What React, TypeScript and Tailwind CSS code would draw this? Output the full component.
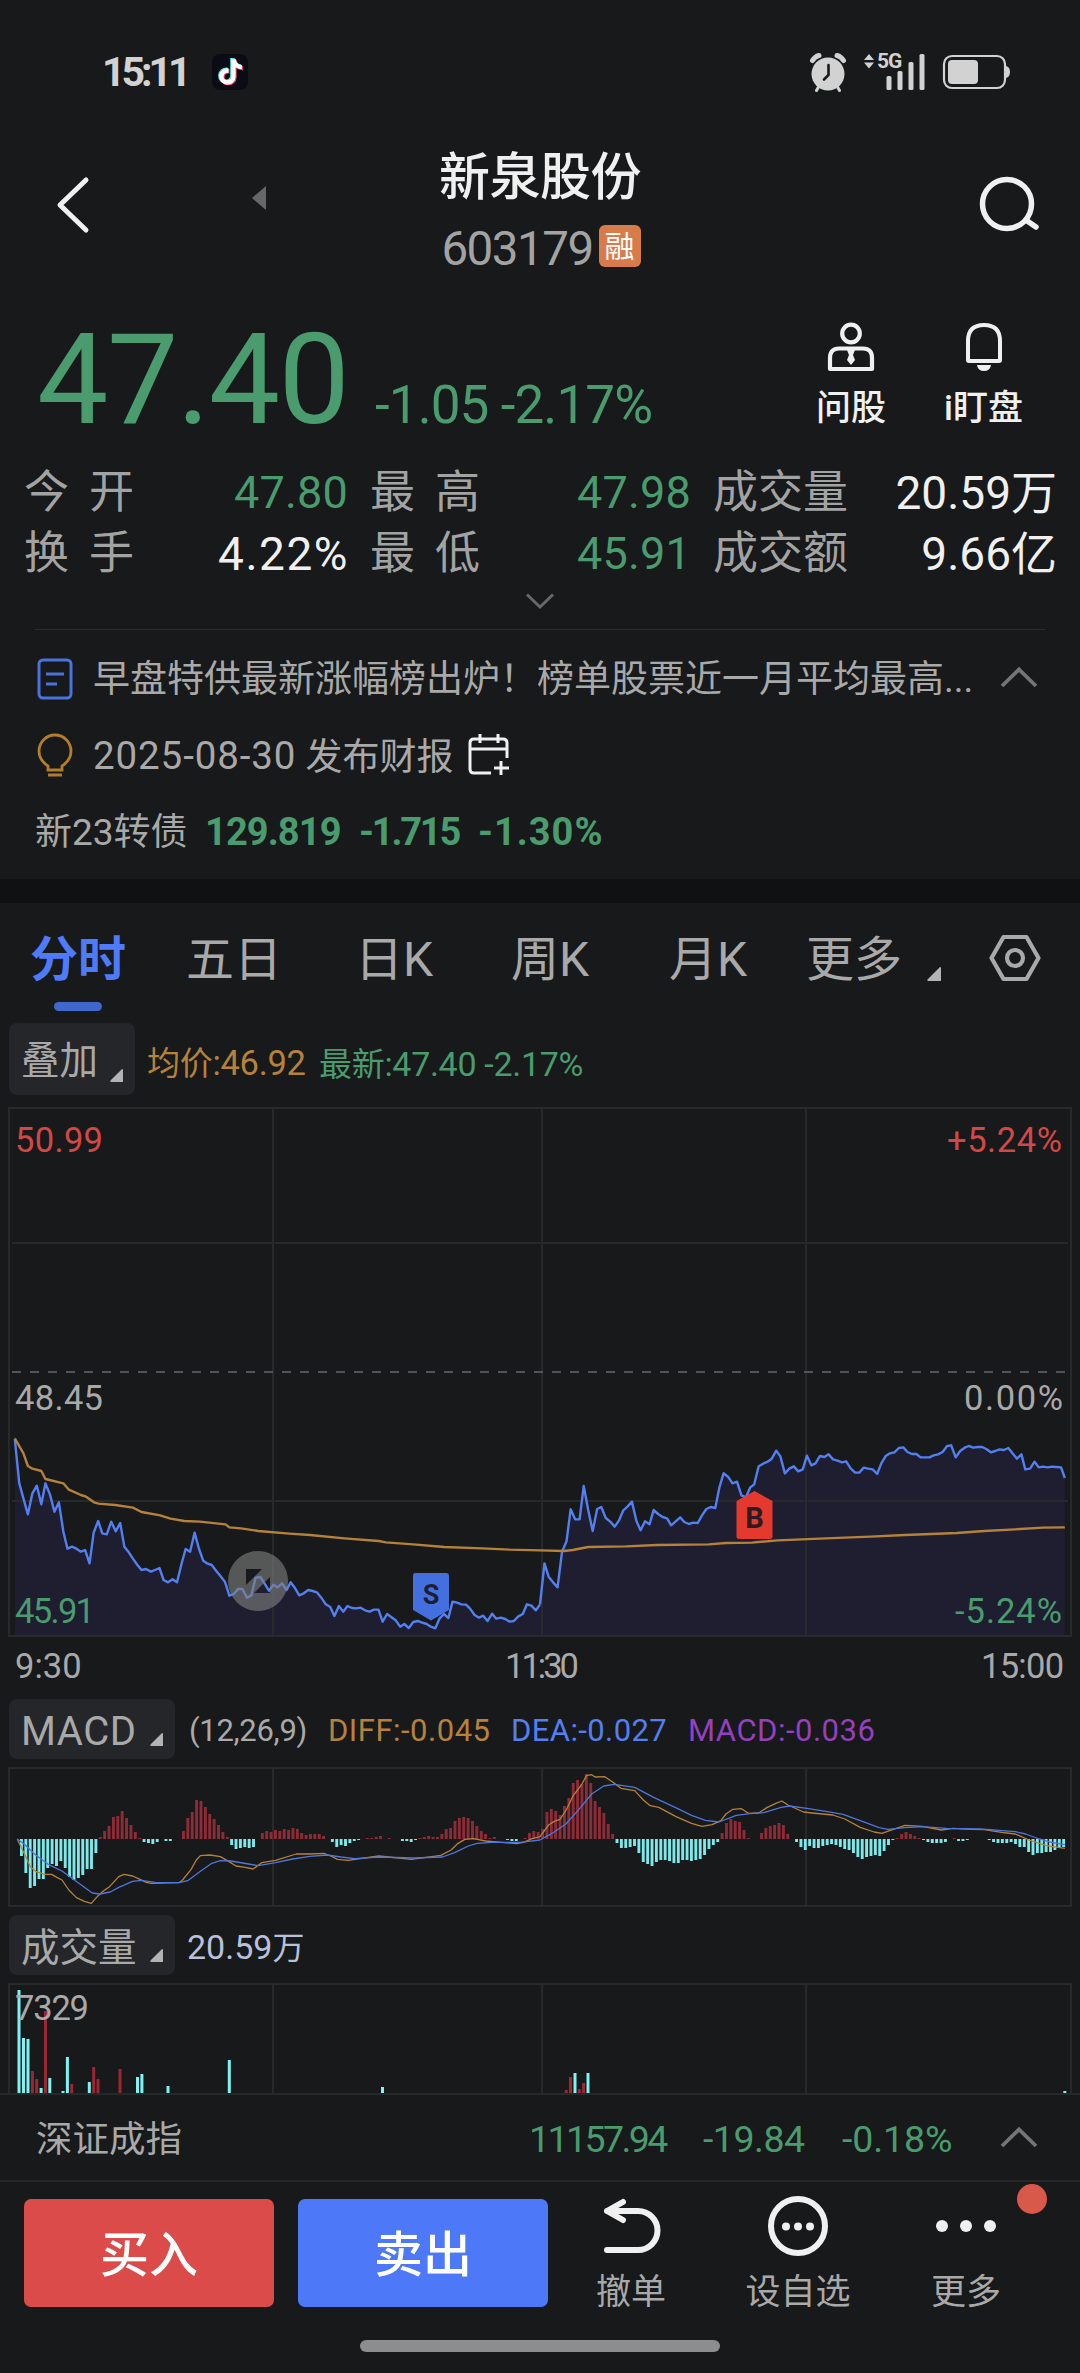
import React from "react";
import { FaTiktok } from "react-icons/fa";

const MORNING_PRICE =
  "43,297 56,430 68,475 81,523 94,460 107,437 120,493 132,430 145,463 158,515 171,487 184,575 196,626 209,620 222,626 235,635 247,630 260,670 272,578 285,543 297,580 310,583 323,545 336,574 349,549 361,620 374,637 386,656 399,675 411,690 424,687 438,695 450,690 463,684 475,720 488,727 501,718 514,727 527,672 539,627 552,635 565,578 578,627 590,662 603,671 615,675 628,693 640,708 653,725 666,767 679,762 691,747 704,747 717,773 730,766 742,713 756,711 768,730 781,752 794,734 806,742 819,730 832,750 844,727 857,745 869,766 882,760 895,750 908,753 920,757 933,773 946,793 959,801 971,828 984,798 997,815 1009,798 1022,804 1035,805 1047,803 1060,811 1073,815 1086,809 1099,809 1111,845 1124,822 1137,832 1149,841 1162,860 1174,852 1187,864 1200,846 1213,843 1226,848 1239,852 1251,860 1264,865 1276,836 1289,822 1302,834 1314,785 1327,788 1340,793 1353,794 1365,806 1378,825 1391,833 1403,827 1416,843 1429,821 1441,836 1454,833 1467,837 1480,845 1492,843 1505,829 1518,822 1530,793 1543,797 1556,811 1568,793";
const AFTERNOON_PRICE =
  "0,793 13,670 25,710 38,727 51,742 64,635 77,604 89,508 102,538 115,538 127,438 140,510 153,573 166,507 178,501 191,534 204,545 217,560 229,542 242,511 254,500 267,485 280,543 292,571 305,544 318,553 330,510 343,522 356,531 369,535 381,556 394,544 407,532 419,546 432,552 445,548 458,549 470,527 483,507 496,501 509,504 521,442 533,400 546,410 559,430 572,425 585,466 598,472 610,443 622,433 635,379 648,371 661,365 673,356 686,332 698,349 711,400 724,386 737,379 750,394 763,388 775,347 788,376 800,370 813,348 826,351 838,343 851,358 864,362 877,367 889,364 902,385 915,398 927,398 940,383 953,386 966,388 979,402 991,370 1004,348 1016,340 1029,337 1042,324 1055,322 1067,336 1080,342 1093,342 1105,352 1118,352 1131,352 1143,346 1156,343 1169,336 1182,318 1194,316 1207,352 1220,333 1233,323 1245,318 1258,323 1271,321 1284,321 1296,327 1309,337 1322,333 1334,328 1347,330 1360,324 1372,340 1385,356 1398,343 1409,388 1423,386 1436,365 1448,382 1461,380 1474,382 1486,380 1499,381 1513,382 1524,414";
const MORNING_AVG =
  "43,295 68,340 81,378 94,386 120,393 132,417 184,430 200,449 235,465 250,470 273,487 286,491 335,495 386,503 411,516 465,526 495,536 535,543 580,545 655,553 666,562 700,565 750,573 840,581 900,585 1000,595 1100,603 1120,607 1200,613 1290,621 1400,625 1480,629 1568,631";
const AFTERNOON_AVG =
  "0,631 70,633 95,630 140,621 250,619 340,615 490,613 540,609 615,608 690,601 830,595 960,590 1060,585 1210,579 1290,573 1380,568 1460,563 1524,562";
const MORNING_DIFF =
  "50,447 60,468 75,500 88,530 105,545 130,553 150,553 165,562 180,570 200,600 222,623 245,634 265,640 285,617 300,603 318,590 345,560 360,553 385,558 400,565 425,577 440,580 520,578 530,570 555,538 570,510 582,497 610,495 640,500 665,515 685,528 712,532 735,537 760,518 800,511 860,492 900,492 940,490 960,498 980,508 1010,511 1100,498 1195,508 1280,496 1310,480 1330,460 1350,448 1375,446 1410,453 1500,461 1520,457 1545,446 1568,440";
const AFTERNOON_DIFF =
  "0,440 25,405 40,395 58,388 75,362 97,316 120,285 135,257 150,254 160,261 188,260 215,279 235,295 275,302 300,330 320,347 345,352 395,380 440,400 470,409 500,404 525,392 540,372 560,358 585,356 605,370 635,369 660,352 685,340 702,333 720,345 765,366 790,369 850,375 885,387 930,412 970,426 993,430 1015,422 1060,406 1110,409 1165,420 1200,415 1250,418 1290,419 1340,427 1380,432 1420,450 1470,467 1524,475";
const MORNING_DEA =
  "50,447 70,462 100,492 140,523 180,543 205,562 245,592 268,609 290,612 320,606 345,592 385,574 410,571 450,577 520,578 545,572 580,545 615,520 640,512 670,513 750,527 800,518 850,507 900,499 950,495 990,501 1030,506 1100,501 1200,504 1285,501 1320,488 1360,468 1385,460 1430,457 1510,457 1568,450";
const AFTERNOON_DEA =
  "0,450 40,427 75,402 110,362 150,312 185,288 215,283 275,292 330,322 400,356 440,376 480,391 520,396 570,376 610,371 650,368 700,352 725,348 780,356 830,364 880,373 930,392 985,413 1010,418 1060,413 1110,410 1180,415 1280,417 1380,425 1410,432 1450,447 1480,456 1524,464";

// One histogram value per minute, split by trading session.
const MACD_MORNING = [
  -51, -102, -147, -141, -120, -120, -87, -75, -81, -66, -87, -114, -123, -117, -108, -90, -90, -42, 6, 24, 39, 66, 69, 84,
  63, 42, 21, 3, -9, -12, -15, -9, 0, -6, -6, 0, 0, 24, 63, 81, 117, 114, 96, 75, 60, 42, 21, 6, -18, -30, -27, -24, -27,
  -24, 0, 18, 24, 21, 27, 24, 30, 27, 33, 30, 18, 12, 15, 15, 15, 9, 0, -9, -24, -18, -21, -12, -6, -3, 0, 3, 3, 6, 9, 0,
  3, 0, 0, -6, -6, -9, -3, 3, 6, 9, 6, 6, 15, 30, 33, 54, 63, 66, 63, 54, 39, 24, 15, 3, 6, 0, 0, -3, -6, -6, 0, 3, 18,
  24, 21,
];
const MACD_AFTERNOON = [
  30, 81, 90, 84, 72, 99, 123, 168, 177, 165, 195, 168, 114, 96, 78, 45, 15, -12, -27, -27, -24, -21, -42, -69, -75, -81,
  -69, -63, -63, -66, -72, -72, -63, -63, -66, -63, -60, -48, -30, -18, -9, 18, 48, 60, 54, 51, 27, 3, 0, 0, 18, 33, 39,
  42, 48, 42, 15, 0, -9, -24, -33, -21, -27, -27, -21, -18, -15, -18, -24, -30, -33, -42, -54, -60, -54, -51, -48, -51,
  -36, -18, -3, 3, 15, 21, 15, 9, 3, -3, -9, -12, -12, -12, -9, 0, 3, -6, -6, -3, 0, 0, 0, 0, -3, -9, -12, -12, -12, -9,
  -15, -24, -24, -39, -48, -42, -42, -39, -39, -33, -24, -24,
];

// [x, height, rising]
const VOLUME: [number, number, boolean][] = [
  [19, 103, false], [23.5, 55, false], [28, 54, false], [32.4, 22, true], [36.7, 14, true], [41.1, 5, false],
  [45.5, 82, true], [49.8, 15, false], [63, 2, false], [67.4, 36, false], [71.7, 9, true], [89.3, 11, false],
  [93.7, 26, true], [98, 14, true], [120, 24, true], [137.5, 16, false], [141.9, 19, false], [168, 7, false],
  [229.3, 33, false], [382.5, 6, false], [566.2, 3, true], [570.5, 16, true], [575, 20, false], [579.3, 4, true],
  [583.6, 10, true], [588, 20, false], [1064.8, 2, false],
];

const AM = "translate(0 0) scale(0.34439 0.33333)";
const PM = "translate(540 0) scale(0.34439 0.33333)";
const GRID = "#27292b";
const GREEN = "#4a9b6e";
const GREY = "#a9a9a9";

function Series({ am, pm, color, width }: { am: string; pm: string; color: string; width: number }) {
  return (
    <g fill="none" stroke={color} strokeWidth={width} strokeLinejoin="round">
      <polyline transform={AM} points={am} vectorEffect="non-scaling-stroke" />
      <polyline transform={PM} points={pm} vectorEffect="non-scaling-stroke" />
    </g>
  );
}

function StatusBar() {
  return (
    <div className="flex h-[144px] items-center pl-[102px] pr-[70px] text-[#d2d2d2]">
      <span className="w-[110px] pt-[1px] text-[41px] font-bold tracking-[-4px]">15:11</span>
      <svg width="36" height="36" viewBox="0 0 36 36">
        <rect width="36" height="36" rx="8" fill="#0b0b16" />
        <FaTiktok x="4.500" y="4" size={26} color="#4de8e4" />
        <FaTiktok x="6.500" y="5.500" size={26} color="#f2425c" />
        <FaTiktok x="5.500" y="4.700" size={26} color="#ffffff" />
      </svg>
      <svg className="ml-auto" width="38" height="40" viewBox="0 0 38 40" fill="none" stroke="#d2d2d2">
        <circle cx="19" cy="22" r="16.500" fill="#d2d2d2" stroke="none" />
        <path d="M3.500 8.500 Q6 4.500 10 3.500 M34.500 8.500 Q32 4.500 28 3.500" strokeWidth="5" strokeLinecap="round" />
        <path d="M10 34 L7.500 38.500 M28 34 L30.500 38.500" strokeWidth="3" strokeLinecap="round" />
        <path d="M19.500 13 V23 L15 27.500" stroke="#17191a" strokeWidth="2.600" strokeLinecap="round" />
      </svg>
      <div className="relative ml-[17px] h-[38px] w-[62px]">
        <svg width="62" height="38" viewBox="0 0 62 38" fill="#d2d2d2">
          <path d="M5 1 L10 7 H0 Z M0 9.500 H10 L5 15.500 Z" />
          <rect x="22.500" y="23" width="5" height="14" rx="1.500" />
          <rect x="33.500" y="18" width="5" height="19" rx="1.500" />
          <rect x="44.500" y="9" width="5" height="28" rx="1.500" />
          <rect x="55.500" y="1" width="5" height="36" rx="1.500" />
        </svg>
        <span className="absolute left-[13px] top-[-4px] text-[21px] font-bold leading-[25px] tracking-[-1px]">5G</span>
      </div>
      <svg className="ml-[16px]" width="68" height="36" viewBox="0 0 68 36">
        <rect x="2" y="2" width="61" height="32" rx="8" fill="none" stroke="#d2d2d2" strokeWidth="2.200" />
        <rect x="6" y="6" width="30" height="24" rx="4" fill="#d2d2d2" />
        <path d="M64 12 Q68 13 68 18 Q68 23 64 24 Z" fill="#d2d2d2" />
      </svg>
    </div>
  );
}

function Header() {
  return (
    <header className="flex h-[144px]">
      <div className="flex w-[378px] items-start pl-[55px]">
        <svg className="mt-[32px]" width="36" height="58" viewBox="0 0 36 58" fill="none" stroke="#f0f0f0" strokeWidth="5" strokeLinecap="round" strokeLinejoin="round">
          <path d="M31 4 L5 29 L31 54" />
        </svg>
        <svg className="ml-[160px] mt-[41px]" width="16" height="26" viewBox="0 0 16 26">
          <path d="M15 1 V25 L1 13 Z" fill="#666768" />
        </svg>
      </div>
      <div className="flex w-[324px] flex-col items-center pt-[6px]">
        <h1 className="h-[56px] text-[51px] font-medium leading-[56px] tracking-[-0.500px] text-[#f0f0f0]">新泉股份</h1>
        <div className="mt-[19px] flex h-[42px] items-center gap-[6px] pl-[2px]">
          <span className="pt-[5px] text-[47.500px] leading-[42px] tracking-[-1.500px] text-[#a3a3a3]">603179</span>
          <span className="flex h-[42px] w-[42px] items-center justify-center rounded-[6px] bg-[#d87b4b] pt-[2px] text-[30px] leading-none text-white">融</span>
        </div>
      </div>
      <div className="flex w-[378px] items-start justify-end pr-[38px] pt-[30px]">
        <svg width="64" height="62" viewBox="0 0 64 62" fill="none" stroke="#f0f0f0" strokeWidth="5.500" strokeLinecap="round">
          <circle cx="29" cy="30" r="24.500" />
          <path d="M50 47.500 L58 53" />
        </svg>
      </div>
    </header>
  );
}

function PriceRow() {
  return (
    <div className="flex h-[173px] items-start pl-[37px] pr-[57px]">
      <div className="flex items-baseline pt-[28px] text-[#4a9b6e]">
        <span className="w-[338px] text-[127px] leading-[127px] tracking-[-1.500px]">47.40</span>
        <span className="whitespace-pre text-[53px] leading-[53px] tracking-[-0.900px]">-1.05 -2.17%</span>
      </div>
      <div className="ml-auto flex gap-[58px] pt-[34px] text-[35px] font-medium leading-[36px] text-[#f0f0f0]">
        <div className="flex flex-col items-center gap-[19px]">
          <svg width="50" height="50" viewBox="0 0 50 50" fill="none" stroke="#f0f0f0" strokeWidth="4.200" strokeLinejoin="round">
            <circle cx="25" cy="11.500" r="8.800" />
            <path d="M13 26.500 H37 Q46 26.500 46 36 V47 H4 V36 Q4 26.500 13 26.500 Z" />
            <path d="M21 28 H29 L27 33 L29 38 L25 43 L21 38 L23 33 Z" fill="#f0f0f0" stroke="none" />
          </svg>
          <span>问股</span>
        </div>
        <div className="flex flex-col items-center gap-[19px]">
          <svg width="50" height="50" viewBox="0 0 50 50" fill="none" stroke="#f0f0f0" strokeWidth="4" strokeLinejoin="round">
            <path d="M9 38 V19 Q9 3 25 3 Q41 3 41 19 V38 Q41 39 40 39 H10 Q9 39 9 38 Z" />
            <path d="M18 43 H32 Q31 49 25 49 Q19 49 18 43 Z" fill="#f0f0f0" stroke="none" />
          </svg>
          <span>i盯盘</span>
        </div>
      </div>
    </div>
  );
}

function Stat({ label, value, tone, wide }: { label: string; value: string; tone: string; wide?: boolean }) {
  return (
    <div className="flex h-[61px] items-center justify-between whitespace-nowrap pt-[2px] text-[45px] leading-none">
      <span className={wide ? "tracking-[20px] text-[#a3a3a3]" : "text-[#a3a3a3]"}>{label}</span>
      <span className={tone}>{value}</span>
    </div>
  );
}

const FALLING = "mr-[-2px] tracking-[0.200px] text-[#4a9b6e]";
const NEUTRAL = "mr-[-2px] text-[46px] text-[#f0f0f0]";
const RATIO = "mr-[-3px] text-[46px] tracking-[1.500px] text-[#f0f0f0]";

function ChevronUp() {
  return (
    <svg width="38" height="22" viewBox="0 0 38 22" fill="none" stroke="#747577" strokeWidth="3.800">
      <path d="M2 20 L19 3.500 L36 20" />
    </svg>
  );
}

function News() {
  return (
    <section className="whitespace-nowrap text-[37px] leading-none text-[#a9a9a9]">
      <div className="flex h-[98px] items-center pl-[37px] pr-[42px]">
        <svg width="36" height="42" viewBox="0 0 36 42" fill="none" stroke="#4a73dc" strokeWidth="3">
          <rect x="2" y="2" width="32" height="38" rx="4" />
          <path d="M9 16 H27 M9 26 H20" />
        </svg>
        <span className="ml-[20px]">早盘特供最新涨幅榜出炉！榜单股票近一月平均最高...</span>
        <span className="mb-[4px] ml-auto">
          <ChevronUp />
        </span>
      </div>
      <div className="flex h-[54px] items-center pl-[37px]">
        <svg width="36" height="44" viewBox="0 0 36 44" fill="none" stroke="#b07e2c" strokeWidth="2.800">
          <path d="M11 37 V33 Q2 27 2 18 A16 16 0 0 1 34 18 Q34 27 25 33 V37 Z" />
          <path d="M11 42 H25" strokeWidth="3" />
        </svg>
        <span className="ml-[20px] pt-[3px] text-[38.500px] tracking-[0.900px]">2025-08-30</span>
        <span className="ml-[9px] pt-[4px] text-[37px]">发布财报</span>
        <svg className="ml-[15px]" width="42" height="42" viewBox="0 0 42 42" fill="none" stroke="#f0f0f0" strokeWidth="3">
          <path d="M23 39 H6 Q2 39 2 35 V9 Q2 5 6 5 H35 Q39 5 39 9 V24 M2 15 H39 M12 0 V9 M30 0 V9 M33 27 V41 M26 34 H41" />
        </svg>
      </div>
      <div className="flex h-[97px] items-center pl-[35px] pt-[3px]">
        <span className="w-[170px]">新23转债</span>
        <span className="flex text-[38px] font-bold text-[#4a9b6e]">
          <span className="w-[154px] tracking-[-0.900px]">129.819</span>
          <span className="w-[119px] tracking-[-2.200px]">-1.715</span>
          <span className="tracking-[1px]">-1.30%</span>
        </span>
      </div>
    </section>
  );
}

function Corner({ size }: { size: number }) {
  return (
    <svg width={size} height={size} viewBox="0 0 14 14" fill="#b3b3b3">
      <path d="M13 0 Q14 0 14 1 V14 H1 Q0 13.500 0.500 12.500 Z" />
    </svg>
  );
}

function Tabs() {
  return (
    <nav className="flex h-[112px] items-center whitespace-nowrap pr-[39px] pt-[2px] text-[48px] leading-none text-[#a9a9a9]">
      <span className="relative ml-[30px] w-[156px] font-bold text-[#4f7bfb]">
        分时
        <span className="absolute left-[24px] top-[66px] h-[9px] w-[48px] rounded-full bg-[#3f67cc]" />
      </span>
      <span className="w-[169px]">五日</span>
      <span className="w-[156px]">日K</span>
      <span className="w-[158px]">周K</span>
      <span className="w-[137px]">月K</span>
      <span>更多</span>
      <span className="ml-[25px] mt-[28px]">
        <Corner size={14} />
      </span>
      <svg className="mb-[5px] ml-auto" width="52" height="48" viewBox="0 0 52 48" fill="none" stroke="#a9a9a9" strokeWidth="4.200" strokeLinejoin="round">
        <path d="M14.500 3 H37.500 L49.500 24 L37.500 45 H14.500 L2.500 24 Z" />
        <circle cx="26" cy="24" r="8" />
      </svg>
    </nav>
  );
}

function Chip({ label, className }: { label: string; className: string }) {
  return (
    <div className={`relative ml-[9px] rounded-[8px] bg-[#242629] pl-[12px] leading-none text-[#a9a9a9] ${className}`}>
      <span>{label}</span>
      <span className="absolute bottom-[13px] right-[12px]">
        <Corner size={13} />
      </span>
    </div>
  );
}

function PriceChart() {
  return (
    <svg className="block" width="1080" height="545" viewBox="0 1095 1080 545">
      <g transform="translate(0 1340)">
        <polygon transform={AM} points={`43,885 ${MORNING_PRICE} 1568,885`} fill="#1e1e30" />
        <polygon transform={PM} points={`0,885 ${AFTERNOON_PRICE} 1524,885`} fill="#1e1e30" />
      </g>
      <g stroke={GRID} strokeWidth="2" fill="none">
        <rect x="9" y="1108" width="1062" height="528" />
        <path d="M273 1108 V1636 M542 1108 V1636 M806 1108 V1636 M12 1243 H1068 M12 1501 H1068" />
      </g>
      <path d="M12 1372 H1065" stroke="#505357" strokeWidth="2" strokeDasharray="9 9" />
      <g fontSize="34.500" fill={GREY}>
        <text x="15" y="1151.500" fill="#d34846" textLength="88">50.99</text>
        <text x="15" y="1409.500" textLength="88">48.45</text>
        <text x="15" y="1622.500" fill={GREEN} textLength="80">45.91</text>
        <text x="947" y="1151.500" fill="#d34846" textLength="115">+5.24%</text>
        <text x="964" y="1409.500" textLength="99">0.00%</text>
        <text x="955" y="1622.500" fill={GREEN} textLength="107">-5.24%</text>
      </g>
      <g transform="translate(0 1340)">
        <Series am={MORNING_PRICE} pm={AFTERNOON_PRICE} color="#547ff0" width={2.4} />
        <Series am={MORNING_AVG} pm={AFTERNOON_AVG} color="#b6823a" width={2.4} />
      </g>
      <path d="M258 1551 a30 30 0 1 0 0.010 0 Z M246 1569 H262 L246 1585 Z M270 1577 V1593 H254 Z" fill="#808080" fillOpacity="0.600" fillRule="evenodd" />
      <g>
        <path d="M415 1573 H446 Q449 1573 449 1576 V1610 L431 1620.500 L413 1610 V1576 Q413 1573 415 1573 Z" fill="#446fdf" />
        <text x="431" y="1604" fontSize="27" fontWeight="700" textAnchor="middle" fill="#1c1f30">S</text>
        <path d="M754.500 1491 L772.500 1501 V1537 Q772.500 1539 770 1539 H739 Q736.500 1539 736.500 1537 V1501 Z" fill="#e33a2d" />
        <text x="754.500" y="1528" fontSize="29" fontWeight="700" textAnchor="middle" fill="#2a1c20">B</text>
      </g>
    </svg>
  );
}

function MacdChart() {
  const bars = [...MACD_MORNING, ...MACD_AFTERNOON];
  return (
    <svg className="block" width="1080" height="156" viewBox="0 1759 1080 156">
      <g stroke={GRID} strokeWidth="2" fill="none">
        <rect x="9" y="1768" width="1062" height="138" />
        <path d="M273 1768 V1906 M542 1768 V1906 M806 1768 V1906" />
      </g>
      {bars.map((v, i) =>
        v === 0 ? null : (
          <rect
            key={i}
            x={20 + i * 4.379}
            y={v > 0 ? 1839 - v / 3 : 1839}
            width="2.900"
            height={Math.abs(v) / 3}
            fill={v > 0 ? "#8f2b36" : "#7ce9ea"}
          />
        ),
      )}
      <g transform="translate(0 1690)">
        <Series am={MORNING_DIFF} pm={AFTERNOON_DIFF} color="#b6823a" width={1.3} />
        <Series am={MORNING_DEA} pm={AFTERNOON_DEA} color="#4f76dc" width={1.3} />
      </g>
    </svg>
  );
}

function VolumeChart() {
  return (
    <svg className="block" width="1080" height="118" viewBox="0 1975 1080 118">
      <path d="M9 2093 V1984 H1071 V2093 M273 1984 V2093 M542 1984 V2093 M806 1984 V2093" stroke={GRID} strokeWidth="2" fill="none" />
      {VOLUME.map(([x, h, rising]) => (
        <rect key={x} x={x - 1.5} y={2093 - h} width="3" height={h} fill={rising ? "#9c2733" : "#7ff3f3"} />
      ))}
      <text x="15" y="2019.500" fontSize="34.500" fill={GREY} textLength="74">7329</text>
    </svg>
  );
}

function BottomBar() {
  return (
    <div className="flex h-[193px] items-start border-t-2 border-[#242628] pl-[24px] leading-none">
      <button className="mt-[17px] h-[108px] w-[250px] rounded-[7px] bg-[#da4b4a] pt-[4px] text-[49px] font-medium text-white">买入</button>
      <button className="ml-[24px] mt-[17px] h-[108px] w-[250px] rounded-[7px] bg-[#4d78f8] pt-[4px] text-[49px] font-medium text-white">卖出</button>
      <div className="ml-[32px] mt-[14px] flex w-[102px] flex-col items-center text-[35px] text-[#a9a9a9]">
        <svg width="62" height="60" viewBox="0 0 62 60" fill="none" stroke="#f0f0f0" strokeWidth="6" strokeLinecap="round" strokeLinejoin="round">
          <path d="M23 6 L7 15 L23 24 M7 15 H38 A19.500 19.500 0 0 1 38 54 H7" />
        </svg>
        <span className="mt-[19px] whitespace-nowrap">撤单</span>
      </div>
      <div className="ml-[51px] mt-[14px] flex w-[130px] flex-col items-center text-[35px] text-[#a9a9a9]">
        <svg width="60" height="60" viewBox="0 0 60 60">
          <circle cx="30" cy="30" r="27" fill="none" stroke="#f0f0f0" strokeWidth="6" />
          <g fill="#f0f0f0">
            <circle cx="18" cy="30.500" r="4" />
            <circle cx="30" cy="30.500" r="4" />
            <circle cx="42" cy="30.500" r="4" />
          </g>
        </svg>
        <span className="mt-[19px] whitespace-nowrap">设自选</span>
      </div>
      <div className="relative ml-[48px] mt-[14px] flex w-[110px] flex-col items-center text-[35px] text-[#a9a9a9]">
        <svg width="62" height="60" viewBox="0 0 62 60" fill="#f0f0f0">
          <circle cx="7" cy="30" r="6" />
          <circle cx="31" cy="30" r="6" />
          <circle cx="55" cy="30" r="6" />
        </svg>
        <span className="mt-[19px] whitespace-nowrap">更多</span>
        <span className="absolute left-[106px] top-[-12px] h-[30px] w-[30px] rounded-full bg-[#d8594a]" />
      </div>
    </div>
  );
}

export default function App() {
  return (
    <main className="flex h-[2373px] w-[1080px] flex-col overflow-hidden bg-[#17191a] font-['Roboto','Noto_Sans_CJK_SC',sans-serif]">
      <StatusBar />
      <Header />
      <PriceRow />
      <div className="grid h-[122px] grid-cols-[322px_319px_342px] gap-x-[24px] pl-[24px]">
        <Stat label="今开" value="47.80" tone={FALLING} wide />
        <Stat label="最高" value="47.98" tone={FALLING} wide />
        <Stat label="成交量" value="20.59万" tone={NEUTRAL} />
        <Stat label="换手" value="4.22%" tone={RATIO} wide />
        <Stat label="最低" value="45.91" tone={FALLING} wide />
        <Stat label="成交额" value="9.66亿" tone={NEUTRAL} />
      </div>
      <div className="flex h-[46px] justify-center pt-[9px]">
        <svg width="30" height="18" viewBox="0 0 30 18" fill="none" stroke="#66686a" strokeWidth="3">
          <path d="M2 2.500 L15 15 L28 2.500" />
        </svg>
      </div>
      <div className="mx-[35px] h-px bg-[#2b2d2f]" />
      <News />
      <div className="h-[24px] bg-[#0f1113]" />
      <Tabs />
      <div className="flex h-[80px] items-center whitespace-nowrap pt-[8px] text-[34px] leading-none">
        <Chip label="叠加" className="flex h-[72px] w-[126px] items-center pt-[4px] text-[38.500px]" />
        <span className="ml-[12px] w-[172px] pt-[9px] text-[34.500px] tracking-[-0.300px] text-[#b6823a]">
          <span className="text-[33px]">均价</span>:46.92
        </span>
        <span className="pt-[9px] tracking-[-0.300px] text-[#4a9b6e]">
          <span className="text-[33px]">最新</span>:47.40 -2.17%
        </span>
      </div>
      <PriceChart />
      <div className="flex h-[59px] items-center justify-between pb-[7px] pl-[15px] pr-[17px] text-[34.500px] leading-none text-[#a9a9a9]">
        <span className="w-[82px]">9:30</span>
        <span className="pl-[3px] tracking-[-3px]">11:30</span>
        <span className="w-[82px] tracking-[-0.700px]">15:00</span>
      </div>
      <div className="flex h-[60px] items-center whitespace-nowrap text-[31px] leading-none">
        <Chip label="MACD" className="flex h-[60px] w-[166px] items-center pt-[6px] text-[40px] tracking-[0.500px]" />
        <span className="ml-[14px] w-[139px] pt-[2px] tracking-[-0.300px] text-[#a9a9a9]">(12,26,9)</span>
        <span className="w-[183px] pt-[2px] tracking-[0.500px] text-[#b6823a]">DIFF:-0.045</span>
        <span className="w-[177px] pt-[2px] tracking-[0.400px] text-[#547ff0]">DEA:-0.027</span>
        <span className="pt-[2px] tracking-[0.500px] text-[#9440bf]">MACD:-0.036</span>
      </div>
      <MacdChart />
      <div className="flex h-[60px] items-center whitespace-nowrap leading-none">
        <Chip label="成交量" className="flex h-[60px] w-[166px] items-center pt-[7px] text-[38.500px]" />
        <span className="ml-[12px] pt-[4px] text-[34px] text-[#b9c0da]">
          20.59<span className="text-[32px]">万</span>
        </span>
      </div>
      <VolumeChart />
      <div className="flex h-[87px] items-center whitespace-nowrap border-t-2 border-[#26282a] pl-[36px] pr-[42px] text-[36.500px] leading-none text-[#a9a9a9]">
        <span className="w-[493px] pt-[6px]">深证成指</span>
        <span className="w-[174px] pt-[4px] text-[37.500px] tracking-[-2.600px] text-[#4a9b6e]">11157.94</span>
        <span className="w-[139px] pt-[4px] text-[37.500px] tracking-[-0.500px] text-[#4a9b6e]">-19.84</span>
        <span className="pt-[4px] text-[37.500px] tracking-[-0.100px] text-[#4a9b6e]">-0.18%</span>
        <span className="mb-[2px] ml-auto">
          <ChevronUp />
        </span>
      </div>
      <div className="h-[193px]">
        <BottomBar />
        <div className="relative mx-auto mt-[-33px] h-[12px] w-[360px] rounded-full bg-[#8c8d8f]" />
      </div>
    </main>
  );
}
